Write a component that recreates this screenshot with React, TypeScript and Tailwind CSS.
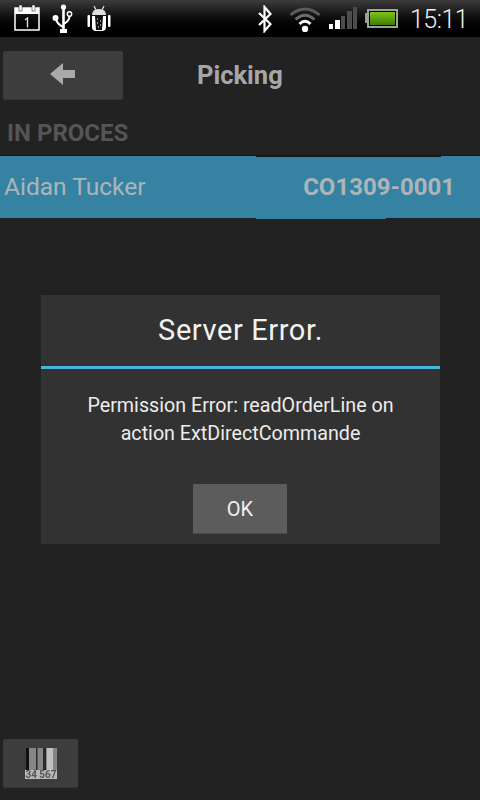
const font = { fontFamily: "Roboto, sans-serif" }

function StatusBar() {
  return (
    <div className="h-[37px] flex items-center bg-gradient-to-b from-[#3c3c3c] via-[#0c0c0c] to-black text-white">
      {/* calendar */}
      <svg width="28" height="27" viewBox="0 0 28 27" className="ml-[14px] mt-[-1px]">
        <rect x="1" y="3" width="24" height="22" fill="none" stroke="#fff" strokeWidth="1.5" />
        <rect x="1" y="3" width="24" height="6" fill="#fff" />
        <rect x="5" y="0" width="3" height="6" fill="#fff" stroke="#111" strokeWidth="0.5" />
        <rect x="18" y="0" width="3" height="6" fill="#fff" stroke="#111" strokeWidth="0.5" />
        <rect x="10" y="11" width="6" height="12" fill="#000" />
        <path d="M11 15 L13.5 13 V22.5" fill="none" stroke="#ddd" strokeWidth="1.4" />
      </svg>
      {/* usb */}
      <svg width="24" height="30" viewBox="0 0 24 30" className="ml-[10px]">
        <circle cx="11.5" cy="3" r="2.6" fill="#fff" />
        <path d="M11.5 3 V27" stroke="#fff" strokeWidth="2.6" />
        <rect x="8" y="25" width="7" height="4" fill="#fff" />
        <circle cx="3.5" cy="14" r="3" fill="#fff" />
        <path d="M4 15 Q5 20 11 23" fill="none" stroke="#fff" strokeWidth="2" />
        <circle cx="17.5" cy="10" r="2.2" fill="none" stroke="#fff" strokeWidth="1.4" />
        <path d="M17.5 12 Q17.5 17 11.5 20" fill="none" stroke="#fff" strokeWidth="2" />
      </svg>
      {/* android debug */}
      <svg width="24" height="28" viewBox="0 0 24 28" className="ml-[11px]">
        <path d="M7 1 L9 5 M17 1 L15 5" stroke="#ddd" strokeWidth="1.3" />
        <path d="M5 10 Q5 4 12 4 Q19 4 19 10 Z" fill="#ddd" />
        <path d="M5 11 H19 V22 Q19 26 15 26 H9 Q5 26 5 22 Z" fill="#fff" />
        <rect x="0.5" y="10" width="2.5" height="12" rx="1" fill="#fff" />
        <rect x="21" y="10" width="2.5" height="12" rx="1" fill="#fff" />
        <path d="M8 11 H16 L15 25 H9 Z" fill="#111" />
        <path d="M10 14 h1 M13 16 h1 M10 18 h1 M13 20 h1 M11 22 h1" stroke="#fff" strokeWidth="1.2" />
      </svg>
      <div className="flex-1" />
      {/* bluetooth */}
      <svg width="16" height="28" viewBox="0 0 16 28" className="mr-[16px]">
        <path d="M2 8 L13.5 19 L7.5 26 V2 L13.5 9 L2 20" fill="none" stroke="#fff" strokeWidth="2.2" />
      </svg>
      {/* wifi */}
      <svg width="32" height="26" viewBox="0 0 32 26" className="mr-[8px]">
        <path d="M1.5 9 Q16 -3 30.5 9" fill="none" stroke="#5c5c5c" strokeWidth="2.8" />
        <path d="M6.5 13.5 Q16 5 25.5 13.5" fill="none" stroke="#6c6c6c" strokeWidth="2.8" />
        <path d="M10.5 18 Q16 12.5 21.5 18" fill="none" stroke="#fff" strokeWidth="2.8" />
        <circle cx="16" cy="23" r="3.2" fill="#fff" />
      </svg>
      {/* signal */}
      <div className="flex items-end gap-[1.5px] h-[22px] mt-[-1px] mr-[8px]">
        <div className="w-[4px] h-[5px] bg-white" />
        <div className="w-[5px] h-[9px] bg-white" />
        <div className="w-[4px] h-[13px] bg-[#4c4c4c]" />
        <div className="w-[5px] h-[18px] bg-[#4c4c4c]" />
        <div className="w-[4px] h-[22px] bg-[#4c4c4c]" />
      </div>
      {/* battery */}
      <div className="flex items-center mt-[-1px]">
        <div className="w-[3px] h-[10px] bg-[#9a9a9a]" />
        <div className="w-[31px] h-[19px] border-[2px] border-[#a0a0a0] bg-black p-[1px] ml-[-1px]">
          <div className="h-full bg-gradient-to-b from-[#7fc41a] to-[#3f7d04]" />
        </div>
      </div>
      <span className="ml-[12px] mr-[11px] mt-[1px] w-[59px] text-[25px] leading-none tracking-[-0.5px] text-[#f0f0f0] font-light whitespace-nowrap" style={font}>
        15:11
      </span>
    </div>
  )
}

function App() {
  return (
    <div className="relative w-[480px] h-[800px] overflow-hidden bg-[#222222] flex flex-col" style={font}>
      <StatusBar />

      {/* Header */}
      <div className="flex items-center h-[50px] mt-[13px] pl-[3px]">
        <button className="w-[120px] h-[49px] bg-[#3d3d3d] rounded-[2px] border-b border-[#333] flex items-center justify-center">
          <svg width="25" height="22" viewBox="0 0 25 22" className="mr-[2px] mb-[1px]">
            <path d="M0 11 L13 0 V7 H25 V15 H13 V22 Z" fill="#a9a9a9" />
          </svg>
        </button>
        <h1 className="ml-[74px] text-[25.5px] font-bold text-[#a6a6a6]">Picking</h1>
      </div>

      <p className="mt-[19px] pl-[7px] text-[24px] leading-[29px] font-bold text-[#555555]">IN PROCES</p>

      {/* Row */}
      <div className="relative mt-[7px] h-[63px] bg-[#3682a3] border-t border-[#181818] flex items-center justify-between pl-[4px] pr-[25px]">
        <span className="text-[24.5px] text-[#adb5b8]">Aidan Tucker</span>
        <span className="text-[24px] font-bold text-[#adb5b8]">CO1309-0001</span>
        <div className="absolute left-[256px] top-0 w-[185px] h-[1px] bg-[#181818]" />
        <div className="absolute left-[256px] top-[62px] w-[130px] h-[1px] bg-[#3682a3]" />
      </div>

      <div className="flex-1" />

      {/* Barcode button */}
      <button className="ml-[3px] mb-[12px] w-[75px] h-[49px] bg-[#3d3d3d] rounded-[2px] border-b border-[#333] flex items-center justify-center">
        <svg width="32" height="33" viewBox="0 0 32 33" className="blur-[0.6px]">
          <rect x="1" y="1" width="31" height="23" fill="#858585" />
          <path d="M1 1 h3 v23 h-3 z" fill="#111" />
          <path d="M11 1 h1.5 v23 h-1.5 z M18 1 h3 v23 h-3 z" fill="#2a2a2a" />
          <path d="M22 1 h6 v23 h-6 z" fill="#c0c0c0" />
          <rect x="0" y="23" width="32" height="9" fill="#b8b8b8" />
          <text x="16" y="31" textAnchor="middle" fontSize="10" fontWeight="700" fill="#555" fontFamily="Roboto, sans-serif">34 567</text>
        </svg>
      </button>

      {/* Error dialog */}
      <div className="absolute left-[41px] top-[295px] w-[399px] h-[249px] bg-[#323232] flex flex-col items-center">
        <div className="w-full h-[74px] border-b-[3px] border-[#45b4e0] flex items-center justify-center text-[29px] tracking-[0.6px] text-[#f2f2f2]">
          Server Error.
        </div>
        <p className="mt-[23px] w-[330px] text-center text-[19.7px] leading-[28px] text-[#ececec]">
          Permission Error: readOrderLine on action ExtDirectCommande
        </p>
        <button className="mt-[36px] self-start ml-[152px] w-[94px] h-[50px] bg-[#5c5c5c] rounded-[1px] border-b border-[#484848] text-[20px] text-[#f0f0f0]">
          OK
        </button>
      </div>
    </div>
  )
}

export default App
